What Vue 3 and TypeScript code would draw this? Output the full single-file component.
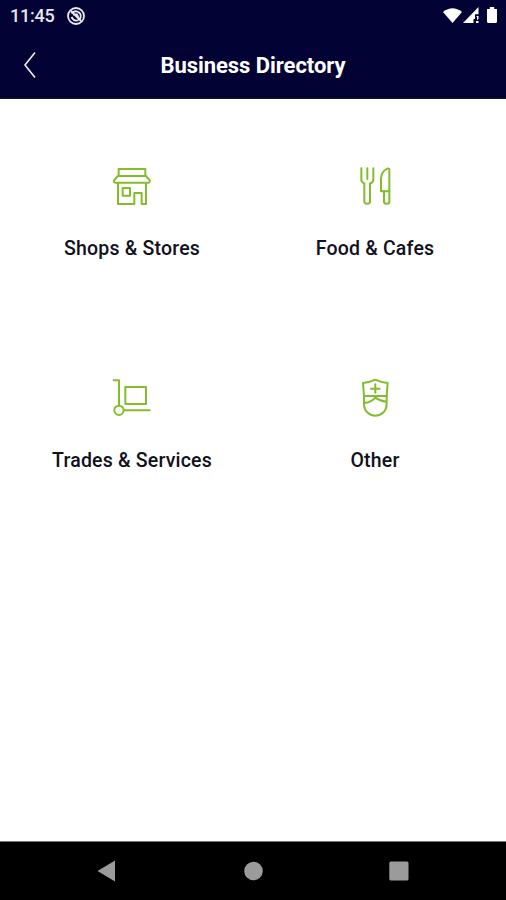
<script setup lang="ts">
interface Category {
  label: string
  viewBox: string
  paths: string[]
}

const categories: Category[] = [
  {
    label: 'Shops & Stores',
    viewBox: '30 30 132 132',
    paths: [
      'M56 63V42H136V63',
      'M54 63H138L149 76Q151 83 143 83H48Q40 83 42 76Z',
      'M54 84V147H103V114H125V147H138V84',
      'M68 99H90V122H68Z',
    ],
  },
  {
    label: 'Food & Cafes',
    viewBox: '24 30 132 132',
    paths: [
      'M49 40V74Q49 82 58 85V140Q58 146 67 146Q75 146 75 140V85Q85 82 85 74V40',
      'M67 40V72',
      'M133 44Q133 39 127 41Q108 50 108 72V109H133Z',
      'M117 109V140Q117 146 125 146Q133 146 133 140V109',
    ],
  },
  {
    label: 'Trades & Services',
    viewBox: '30 27 132 132',
    paths: [
      'M41 37H57V112',
      'M76 57H138V108H76Z',
      'M43 127A14 14 0 1 0 71 127A14 14 0 1 0 43 127Z',
      'M72 127H149',
    ],
  },
  {
    label: 'Other',
    viewBox: '24 27 132 132',
    paths: [
      'M54 45Q75 43 91 35Q107 43 128 45L125 83V108C125 130 109 143 91 143S57 130 57 108V83Z',
      'M57 84H125',
      'M58 105Q78 104 91 89Q104 99 124 101',
      'M91 49V74M78 62H104',
    ],
  },
]
</script>

<template>
  <div class="screen">
    <header class="header">
      <div class="status">
        <span class="time">11:45</span>
        <svg class="sync" viewBox="0 0 20 20" aria-hidden="true">
          <circle cx="10" cy="10" r="8" />
          <path d="M5.5 7.5Q9 3.5 13 6.5Q16 9 14 13M5.5 11Q8 16 12.5 14M7 8.5H11L13 13M5 5L15 15" />
        </svg>
        <svg class="signals" viewBox="0 0 56 20" aria-hidden="true">
          <path d="M0 6Q9.5-1.5 19 6L9.5 17Z" />
          <path d="M35.5 1V8.3H32V13H30.5V17H20Z" />
          <path d="M33 10H35.5V13L34 14V11ZM33 15H35.5V17H33Z" />
          <path d="M44 3H46.8V1H51.2V3H54V15.5Q54 17 52.5 17H45.5Q44 17 44 15.5Z" />
        </svg>
      </div>
      <div class="toolbar">
        <button class="back" aria-label="Back">
          <svg viewBox="0 0 14 28"><path d="M12 1.5L2 14L12 26.5" /></svg>
        </button>
        <h1>Business Directory</h1>
      </div>
    </header>
    <main class="grid">
      <a v-for="item in categories" :key="item.label" class="card">
        <svg class="icon" :viewBox="item.viewBox" aria-hidden="true">
          <path v-for="d in item.paths" :key="d" :d="d" />
        </svg>
        <span class="label">{{ item.label }}</span>
      </a>
    </main>
    <nav class="navbar">
      <svg viewBox="0 0 20 22"><path d="M0.5 11L18 0.5V21.5Z" /></svg>
      <svg viewBox="0 0 20 22"><circle cx="10.5" cy="11" r="9.3" /></svg>
      <svg viewBox="0 0 20 22"><rect x="0.3" y="1.6" width="19.2" height="19" rx="1.5" /></svg>
    </nav>
  </div>
</template>

<style>
body {
  background: #fff;
}
</style>

<style scoped>
.screen {
  box-sizing: border-box;
  display: flex;
  flex-direction: column;
  width: 506px;
  height: 900px;
  overflow: hidden;
  background: #fff;
  font-family: Roboto, sans-serif;
}
.header {
  box-sizing: border-box;
  height: 99px;
  background: #020234;
  border-bottom: 1px solid #15151f;
  color: #fff;
}
.status {
  display: flex;
  align-items: center;
  height: 32px;
  padding: 0 7px 0 10px;
}
.time {
  width: 56px;
  font-size: 18px;
  font-weight: 500;
  line-height: 32px;
  letter-spacing: -0.25px;
  color: #e8e8ee;
}
.sync {
  width: 20px;
  height: 20px;
  fill: none;
  stroke: #e8e8ee;
  stroke-width: 1.8;
}
.signals {
  width: 56px;
  height: 20px;
  margin-left: auto;
  fill: #fff;
}
.toolbar {
  display: grid;
  grid-template-columns: 60px 1fr 60px;
  align-items: center;
  height: 66px;
}
.back {
  display: flex;
  margin: 0;
  padding: 0 0 0 23px;
  border: 0;
  background: none;
}
.back svg {
  width: 14px;
  height: 28px;
  fill: none;
  stroke: #f0f0f0;
  stroke-width: 1.6;
}
h1 {
  margin: 0;
  padding-top: 2px;
  font-size: 22px;
  font-weight: 700;
  line-height: 28px;
  letter-spacing: -0.05px;
  text-align: center;
  white-space: nowrap;
}
.grid {
  flex: 1;
  display: grid;
  grid-template-columns: 244px 242px;
  grid-template-rows: 212px 212px;
  padding: 66px 10px 0;
}
.card {
  display: flex;
  flex-direction: column;
  align-items: center;
  gap: 28px;
}
.icon {
  width: 44px;
  height: 44px;
  fill: none;
  stroke: #83bd2b;
  stroke-width: 6;
  stroke-linecap: round;
  stroke-linejoin: round;
}
.label {
  font-size: 19.5px;
  font-weight: 500;
  line-height: 24px;
  letter-spacing: 0.2px;
  color: #101020;
  white-space: nowrap;
}
.navbar {
  box-sizing: border-box;
  display: flex;
  align-items: center;
  justify-content: space-between;
  height: 59px;
  padding: 0 97px 0 97px;
  border-top: 1px solid #777;
  background: #000;
}
.navbar svg {
  width: 20px;
  height: 22px;
  fill: #9b9b9b;
}
</style>
